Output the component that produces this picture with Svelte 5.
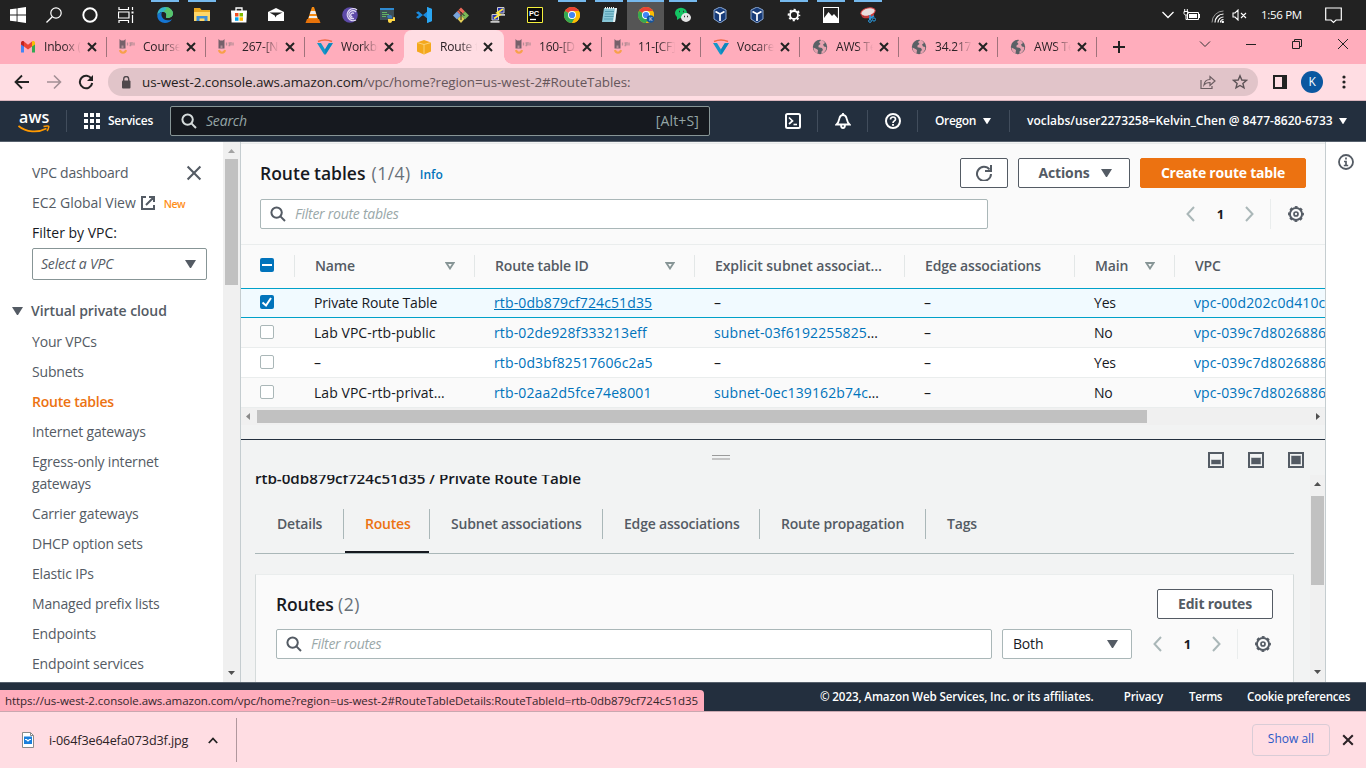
<script>
  const taskIcons = [
    { id: 'edge', open: true }, { id: 'folder', open: true }, { id: 'store' }, { id: 'mail' }, { id: 'vlc' },
    { id: 'bittorrent' }, { id: 'idle' }, { id: 'vscode' }, { id: 'git' }, { id: 'putty' }, { id: 'pycharm' },
    { id: 'chrome', open: true }, { id: 'notepad', open: true }, { id: 'chromeK', open: true, active: true },
    { id: 'wechat', open: true }, { id: 'vbox' }, { id: 'vbox' }, { id: 'gear', open: true },
    { id: 'photos', open: true }, { id: 'snip', open: true }
  ];
  const tabs = [
    { icon: 'gmail', t: 'Inbox (1' }, { icon: 'llama', t: 'Courses' }, { icon: 'llama', t: '267-[NR' },
    { icon: 'voc', t: 'Workbe' }, { icon: 'cube', t: 'Route t', active: true }, { icon: 'llama', t: '160-[DF' },
    { icon: 'llama', t: '11-[CF]' }, { icon: 'voc', t: 'Vocareu' }, { icon: 'globe', t: 'AWS Te' },
    { icon: 'globe', t: '34.217.' }, { icon: 'globe', t: 'AWS Te' }
  ];
  const sideLinks = ['Your VPCs', 'Subnets', 'Route tables', 'Internet gateways', 'Egress-only internet gateways',
    'Carrier gateways', 'DHCP option sets', 'Elastic IPs', 'Managed prefix lists', 'Endpoints', 'Endpoint services'];
  const columns = [
    { t: 'Name', sort: true }, { t: 'Route table ID', sort: true }, { t: 'Explicit subnet associat…' },
    { t: 'Edge associations' }, { t: 'Main', sort: true }, { t: 'VPC' }
  ];
  const rows = [
    { name: 'Private Route Table', id: 'rtb-0db879cf724c51d35', sub: '–', main: 'Yes', vpc: 'vpc-00d202c0d410c8', sel: true },
    { name: 'Lab VPC-rtb-public', id: 'rtb-02de928f333213eff', sub: 'subnet-03f6192255825', main: 'No', vpc: 'vpc-039c7d80268861' },
    { name: '–', id: 'rtb-0d3bf82517606c2a5', sub: '–', main: 'Yes', vpc: 'vpc-039c7d80268861' },
    { name: 'Lab VPC-rtb-privat…', id: 'rtb-02aa2d5fce74e8001', sub: 'subnet-0ec139162b74c', main: 'No', vpc: 'vpc-039c7d80268861' }
  ];
  const detailTabs = [
    { t: 'Details', w: 88 }, { t: 'Routes', w: 86 }, { t: 'Subnet associations', w: 173 },
    { t: 'Edge associations', w: 157 }, { t: 'Route propagation', w: 166 }, { t: 'Tags', w: 80 }
  ];
</script>

{#snippet search(c)}
  <svg class="i16" viewBox="0 0 16 16" fill="none" stroke={c} stroke-width="2"><circle cx="6.6" cy="6.6" r="5.2" /><path d="M10.4 10.4 15 15" /></svg>
{/snippet}
{#snippet caret(w)}
  <svg width={w} height={w * 0.8} viewBox="0 0 10 8"><path d="M0 0h10L5 8z" fill="currentColor" /></svg>
{/snippet}
{#snippet gear()}
  <svg class="i16" viewBox="0 0 16 16" fill="none" stroke="#545b64"><circle cx="8" cy="8" r="6.1" stroke-width="2" /><circle cx="8" cy="8" r="7.1" stroke-width="1.7" stroke-dasharray="2.8 2.77" stroke-dashoffset="1.4" /><circle cx="8" cy="8" r="2" stroke-width="1.7" /></svg>
{/snippet}
{#snippet pager()}
  <div class="pager">
    <svg width="9" height="16" viewBox="0 0 9 16" fill="none" stroke="#aab7b8" stroke-width="2"><path d="M8 1 1.5 8 8 15" /></svg>
    <b>1</b>
    <svg width="9" height="16" viewBox="0 0 9 16" fill="none" stroke="#aab7b8" stroke-width="2"><path d="M1 1 7.500 8 1 15" /></svg>
    <i></i>
    {@render gear()}
  </div>
{/snippet}
{#snippet cross(s, w)}
  <svg width={s} height={s} viewBox="0 0 10 10" stroke="currentColor" stroke-width={w}><path d="M1 1 9 9M9 1 1 9" /></svg>
{/snippet}
{#snippet chrome()}
  <circle cx="8" cy="8" r="8" fill="#fbbc04" />
  <path d="M8 8 1.070 4A8 8 0 0 1 14.93 4z" fill="#ea4335" />
  <path d="M1.070 4A8 8 0 0 0 8 16L11.500 10 8 8z" fill="#34a853" />
  <path d="M8 4H14.930A8 8 0 0 1 8 16L11.460 10z" fill="#fbbc04" />
  <circle cx="8" cy="8" r="4" fill="#fff" /><circle cx="8" cy="8" r="3.1" fill="#4285f4" />
{/snippet}

{#snippet taskIcon(id)}
  <svg class="i16" viewBox="0 0 16 16" fill="none">
    {#if id === 'win'}
      <path d="M0 2.300 6.600 1.400V7.500H0zM7.500 1.300 16 0V7.500H7.500zM0 8.500H6.600V14.600L0 13.700zM7.500 8.500H16V16L7.500 14.700z" fill="#fff" />
    {:else if id === 'find'}
      <circle cx="10" cy="6" r="5.200" stroke="#fff" stroke-width="1.200" /><path d="M6.300 9.700.5 15.500" stroke="#fff" stroke-width="1.300" />
    {:else if id === 'cortana'}
      <circle cx="8" cy="8" r="6.700" stroke="#fff" stroke-width="1.900" />
    {:else if id === 'view'}
      <path d="M1 0v2.500h9.500V0M1 16v-2.500h9.500V16M.5 5h10.500v6H.5zM14.500 0v3M14.500 8v8" stroke="#fff" stroke-width="1.200" /><rect x="13.500" y="4.500" width="2" height="2" fill="#fff" />
    {:else if id === 'edge'}
      <path d="M.3 9C0 3 4 0 8 0c5 0 8 3.500 8 6.500S13 11 10.500 11c-2 0-1.500-1-1.200-2C10 6 7.500 4.500 5 5 2.500 5.500.5 7 .3 9z" fill="#35b5c9" />
      <path d="M8 0c5 0 8 3.500 8 6.500S13 11 10.500 11c-2 0-1.500-1-1.200-2C10 6 8 4.500 6 4.600 8 3 11 2 8 0z" fill="#58c46a" />
      <path d="M.3 9C.5 7 2.500 5.500 5 5 3.800 7 4 13 11 13.300c2 0 3-.5 4-1C13.500 14.800 11 16 8 16 4 16 .5 13 .3 9z" fill="#1576d4" />
    {:else if id === 'folder'}
      <path d="M0 1h6l1.500 2H16v11H0z" fill="#e9a721" /><path d="M0 5h16v9H0z" fill="#ffd768" /><path d="M2.500 9h11v5h-3v-2.500h-5V14h-3z" fill="#3f8fd6" />
    {:else if id === 'store'}
      <path d="M5 4V1h6v3" stroke="#fff" stroke-width="1.300" /><path d="M0 3.500h16l-.6 12H.6z" fill="#fff" />
      <path d="M4 6h3.500v3.500H4z" fill="#f25022" /><path d="M8.500 6H12v3.500H8.500z" fill="#7fba00" /><path d="M4 10.300h3.500v3.500H4z" fill="#00a4ef" /><path d="M8.500 10.300H12v3.500H8.500z" fill="#ffb900" />
    {:else if id === 'mail'}
      <path d="M0 5 8 1l8 4v9H0z" fill="#fff" /><path d="M1.500 5.500h13L8.500 8.500l-1 2-.8-2z" fill="#222" />
    {:else if id === 'vlc'}
      <path d="M7 0h2l4 12H3z" fill="#f58a12" /><path d="M5.800 4h4.400l1 3H4.800zM4.300 9h7.400l.6 2H3.700z" fill="#eee" /><path d="M2 12h12l1.500 4H.5z" fill="#e8730a" />
    {:else if id === 'bittorrent'}
      <circle cx="8" cy="8" r="7.800" fill="#5d4aa8" /><path d="M15 3A6 6 0 1 0 14 13M14 5A4 4 0 1 0 12 11.500M12 6.500A2 2 0 1 0 10.500 10" stroke="#e3dcf5" stroke-width="1.300" />
    {:else if id === 'idle'}
      <path d="M1 1h14v12H1z" fill="#3d4f58" /><path d="M1 1h14v2H1z" fill="#2f8ad0" /><path d="M3 5.500h5M3 7.500h7M3 9.500h4" stroke="#63b463" /><path d="M8 9.500c0-2 5-2 5 0v2H9z" fill="#3e78b2" /><path d="M16 11c0-1.500-2-1.500-2 0v1H9v2c0 2.500 4 2.500 4 0h3z" fill="#ffd845" />
    {:else if id === 'vscode'}
      <path d="M11 0v4.800L2.300 11.800 0 10.300 3 8 0 5.700l2.300-1.500L11 11.200V16l5-2V2z" fill="#1a8ade" /><path d="M11 0v16l5-2V2z" fill="#2aa6f2" />
    {:else if id === 'git'}
      <path d="M8 .5 12 4.500 8 8.500 4 4.500z" fill="#e8685a" /><path d="M12 4.500 16 8.500 12 12.500 8 8.500z" fill="#7bb857" /><path d="M4 4.500 8 8.500 4 12.500 0 8.500z" fill="#7aa5dc" /><path d="M8 8.500 11.500 12 8 16 4.500 12z" fill="#e3ce57" /><path d="M5 2.500 11.500 9M8 5v8" stroke="#222" />
    {:else if id === 'putty'}
      <path d="M7.500.5h6.500v5.500H7.500zM2 7.500h6.500V13H2z" fill="#2733b5" stroke="#ccc" /><path d="M6.500 7.800h8.500M.5 14.800h9" stroke="#c9c9c9" stroke-width="1.700" /><path d="M13 2 7 6l3 1.500-6 4" stroke="#ffea3d" stroke-width="1.700" />
    {:else if id === 'pycharm'}
      <path d="M.5.5h15v15H.5z" fill="#080808" stroke="#f5f03c" /><text x="2" y="8.800" fill="#fff" font-size="7.500" font-weight="700" font-family="Liberation Sans">PC</text><path d="M3 12.500h6" stroke="#fff" stroke-width="1.300" />
    {:else if id === 'chrome'}
      {@render chrome()}
    {:else if id === 'chromeK'}
      {@render chrome()}<circle cx="12.500" cy="12" r="3.800" fill="#14569e" /><text x="11" y="14" font-size="5.500" fill="#fff" font-family="Open Sans">K</text>
    {:else if id === 'notepad'}
      <path d="M3 1h13l-2 14H1z" fill="#87c6d6" /><path d="M14 1h2l-2 14h-2z" fill="#e9f4f6" /><path d="M4 4.500h9M4 7h8.500M3.500 9.500h9M3 12h9" stroke="#559db1" /><path d="M4 1h10" stroke="#eee" stroke-dasharray="1 1" stroke-width="2" />
    {:else if id === 'wechat'}
      <ellipse cx="6" cy="6" rx="6" ry="5.200" fill="#14c463" /><path d="M2 9v4l3-2z" fill="#14c463" /><ellipse cx="11" cy="10.500" rx="5" ry="4.400" fill="#e6e6e6" /><path d="M4 4.500h1M8 4.500h1M9 9.500h1M12 9.500h1" stroke="#333" stroke-width="1.300" />
    {:else if id === 'vbox'}
      <path d="M8 0 14 3v9l-6 4-6-4V3z" fill="#173b78" stroke="#88a5cf" /><path d="M3.500 4.500 8 7l4.500-2.500M8 7v7" stroke="#fff" stroke-width="1.700" />
    {:else if id === 'gear'}
      <circle cx="8" cy="8" r="4" stroke="#fff" stroke-width="1.800" /><circle cx="8" cy="8" r="5.400" stroke="#fff" stroke-width="1.800" stroke-dasharray="2.120 2.120" stroke-dashoffset="1.060" />
    {:else if id === 'photos'}
      <path d="M.5.5h15v15H.5z" stroke="#fff" stroke-width="1.200" fill="#222" /><path d="M1 11 5.500 5 9 9l2-2 4 4.500V15H1z" fill="#fff" />
    {:else if id === 'snip'}
      <ellipse cx="8" cy="5" rx="7.300" ry="4" transform="rotate(-15 8 5)" fill="#e9dede" stroke="#d63e3e" /><path d="M1.500 8.500C4 11 9 9 14 6v2.500C9 12 4 12 2 10z" fill="#c93a3a" /><path d="M10 8v5M14 9l-5 3" stroke="#2b9be0" stroke-width="1.500" /><circle cx="14" cy="12.500" r="1.600" stroke="#2b9be0" /><circle cx="10" cy="14" r="1.400" stroke="#2b9be0" />
    {/if}
  </svg>
{/snippet}

{#snippet favicon(id)}
  <svg class="i16" viewBox="0 0 16 16" fill="none">
    {#if id === 'gmail'}
      <path d="M1 4v9.500h3V7z" fill="#4285f4" /><path d="M12 7v6.500h3V4z" fill="#34a853" /><path d="M1 4c0-2 2-2.500 3-1.500V7.500L1 5.500z" fill="#c5221f" /><path d="M4 2.500 8 5.700l4-3.200v5L8 10.500 4 7.500z" fill="#ea4335" /><path d="M12 2.500c1-1 3-.5 3 1.500v1.500l-3 2z" fill="#fbbc04" />
    {:else if id === 'llama'}
      <path d="M.5 0 2 1.500h3L6.500 0v9.500h-6z" fill="#75606a" /><path d="M2.500 6.500h2V9h-2z" fill="#b58f98" /><path d="M1 11C1.500 14.500 6.500 14.500 7 11" stroke="#f7a04a" stroke-width="2" /><path d="M8.500 3.500v3M10.500 4h1v2.500h-1M13 3v3.500M15 3.500v3" stroke="#b98e97" stroke-width="1.300" />
    {:else if id === 'voc'}
      <path d="M0 4h4l4 6.500L12 4h4L8.800 15.500H7.200z" fill="#1596c9" /><path d="M1 2.500Q8-.5 15 2.500" stroke="#f06a45" stroke-width="1.500" /><path d="M11.500 4.500 8 10.500l.5 4.500L15.500 4.500z" fill="#0d86bb" />
    {:else if id === 'cube'}
      <path d="M1 3.500 8 1l7 2.500v9L8 15.500l-7-3z" fill="#f4a81d" /><path d="M1 3.500 8 5.500l7-2M8 5.500v10" stroke="#fddb8b" stroke-width=".8" />
    {:else}
      <circle cx="8" cy="8" r="7.200" fill="#5b6166" /><path d="M9.500.8 7 3l1.500 2L6.500 6.500v1.700L10 9l1 2-1.500 1.500V15C13 13.500 14.500 11 14.200 8L12 7.500 11 5.500l2-1.500C12 2.500 11 1.500 9.500.8zM1.500 8.500 4.500 10l1.500 1-.5 3.500C3 13.500 1.500 11.500 1.500 8.500z" fill="#ffadbc" opacity=".85" />
    {/if}
  </svg>
{/snippet}

<div class="screen">
  <div class="taskbar">
    {#each ['win', 'find', 'cortana', 'view'] as id}<div class="sys">{@render taskIcon(id)}</div>{/each}
    <div class="apps">
      {#each taskIcons as a}<div class="app" class:open={a.open} class:active={a.active}>{@render taskIcon(a.id)}</div>{/each}
    </div>
    <div class="tray">
      <svg width="12" height="8" viewBox="0 0 12 8" fill="none" stroke="#fff" stroke-width="1.300"><path d="M.5 1 6 6.500 11.500 1" /></svg>
      <svg class="batt" width="17" height="12" viewBox="0 0 17 12" fill="none" stroke="#fff"><path d="M4.500 3.500h11v7h-11zM16.500 5v4M1 2.500h4v2c0 1-1 1.500-2 1.500s-2-.5-2-1.500zM1.700 0v2.500M4.300 0v2.500M3 6v4.500h1.500" /><path d="M6 5h8v4H6z" fill="#fff" stroke="none" /></svg>
      <svg class="wifi" width="13" height="13" viewBox="0 0 13 13" fill="none"><path d="M1 12.500A11.500 11.500 0 0 1 12.500 1" stroke="#999" /><path d="M4 12.500A8.500 8.500 0 0 1 12.500 4M7 12.500A5.500 5.500 0 0 1 12.500 7M9.500 12.500a3 3 0 0 1 3-3" stroke="#fff" stroke-width="1.200" /><circle cx="11.800" cy="12" r="1.200" fill="#fff" /></svg>
      <svg class="vol" width="16" height="12" viewBox="0 0 16 12" fill="none" stroke="#fff" stroke-width="1.100"><path d="M1 4v4h2l3 3V1L3 4zM9 4l5 5M14 4 9 9" /></svg>
      <span class="clock">1:56 PM</span>
      <svg class="note" width="17" height="17" viewBox="0 0 17 17" fill="none" stroke="#fff" stroke-width="1.200"><path d="M.7 1h15.600v12H11l-2.500 2.500L6 13H.7z" /></svg>
    </div>
  </div>

  <div class="tabstrip">
    {#each tabs as t, i}
      <div class="tab" class:active={t.active} class:noline={i === 3 || i === 4}>
        {@render favicon(t.icon)}<span>{t.t}</span><em>{@render cross(10, 2)}</em>
      </div>
    {/each}
    <svg class="plus" width="12" height="12" viewBox="0 0 12 12" stroke="#222" stroke-width="2"><path d="M6 0v12M0 6h12" /></svg>
    <div class="win">
      <svg width="12" height="12" viewBox="0 0 12 12" fill="none" stroke="#333"><path d="M1 3.500 6 8.500l5-5" /></svg>
      <svg width="12" height="12" viewBox="0 0 12 12" fill="none" stroke="#222"><path d="M1 6.500h10" /></svg>
      <svg width="12" height="12" viewBox="0 0 12 12" fill="none" stroke="#222"><path d="M1.500 3.500h7v7h-7zM3.500 3.500v-2h7v7h-2" /></svg>
      <svg width="12" height="12" viewBox="0 0 12 12" fill="none" stroke="#222"><path d="M1 1l10 10M11 1 1 11" /></svg>
    </div>
  </div>

  <div class="toolbar">
    <svg class="i16" viewBox="0 0 16 16" fill="none" stroke="#222" stroke-width="1.800"><path d="M15 8H2M8 1.500 1.500 8 8 14.500" /></svg>
    <svg class="i16" viewBox="0 0 16 16" fill="none" stroke="#a38f95" stroke-width="1.600"><path d="M1 8h13M8 1.500 14.500 8 8 14.500" /></svg>
    <svg class="i16" viewBox="0 0 16 16" fill="none" stroke="#222" stroke-width="2"><path d="M13.500 5A6.200 6.200 0 1 0 14.200 9" /><path d="M15 1v6H9z" fill="#222" stroke="none" /></svg>
    <div class="omni">
      <svg width="10" height="13" viewBox="0 0 10 13" fill="none"><rect x="1" y="4.500" width="8.500" height="8" rx="1" fill="#50484c" /><path d="M2.700 5V3a2.500 2.500 0 0 1 5 0v2" stroke="#50484c" stroke-width="1.400" /></svg>
      <span class="url">us-west-2.console.aws.amazon.com<u>/vpc/home?region=us-west-2#RouteTables:</u></span>
      <svg class="i16" viewBox="0 0 16 16" fill="none" stroke="#6b5d61" stroke-width="1.200"><path d="M1 6v8.500h11V12M4 11c.5-4 3-5.500 6-5.500V2.500L15 7l-5 4.500V8.500C7 8.500 5.500 9 4 11z" /></svg>
      <svg class="i16" viewBox="0 0 16 16" fill="none" stroke="#5d5357" stroke-width="1.400"><path d="m8 1.800 1.800 4.200 4.700.4-3.600 3 1.100 4.500L8 11.500l-4 2.400 1.100-4.500-3.600-3L6.200 6z" /></svg>
    </div>
    <svg class="panel" width="14" height="14" viewBox="0 0 14 14"><path d="M1 1h12v12H1z" fill="none" stroke="#222" stroke-width="2" /><path d="M9 1h4v12H9z" fill="#222" /></svg>
    <div class="avatar">K</div>
    <svg width="4" height="14" viewBox="0 0 4 14" fill="#222"><circle cx="2" cy="2" r="1.600" /><circle cx="2" cy="7" r="1.600" /><circle cx="2" cy="12" r="1.600" /></svg>
  </div>

  <div class="awsnav">
    <div class="logo"><b>aws</b>
      <svg width="32" height="9" viewBox="0 0 32 9" fill="none" stroke="#ff9900"><path d="M.5 1C8 7.500 20 8 28.500 3.500" stroke-width="1.700" /><path d="M25.500 1.500c3-.8 5.500-.8 5.300.3S30 5 29 6" stroke-width="1.500" /></svg>
    </div>
    <i class="sep"></i>
    <svg class="i16 grid9" viewBox="0 0 16 16" fill="#fff">{#each [0, 6, 12] as x}{#each [0, 6, 12] as y}<rect {x} {y} width="4" height="4" />{/each}{/each}</svg>
    <b class="svc">Services</b>
    <div class="bigsearch">{@render search('#d5dbdb')}<em>Search</em><span>[Alt+S]</span></div>
    <div class="right">
      <svg class="i16" viewBox="0 0 16 16" fill="none" stroke="#fff" stroke-width="2"><rect x="1" y="1" width="14" height="14" rx="1.500" /><path d="M4 4.500 7.500 8 4 11" stroke-width="1.700" /><path d="M8.500 11.500H12" stroke-width="1.600" /></svg>
      <i class="sep"></i>
      <svg class="i16" viewBox="0 0 16 16" fill="none" stroke="#fff" stroke-width="1.800"><path d="M1.500 11.500C4 9 4 7 4.500 5c.6-2 2-3 3.500-3s2.900 1 3.500 3c.5 2 .5 4 3 6.500zM8 2V0M6 12c0 4 4 4 4 0" /></svg>
      <i class="sep"></i>
      <svg class="i16" viewBox="0 0 16 16" fill="none" stroke="#fff" stroke-width="2"><circle cx="8" cy="8" r="7" /><path d="M5.500 6.500C5.500 3 10.500 3.500 10.500 6.200 10.500 8 8 7.700 8 10" stroke-width="1.700" /><path d="M8 11v1.700" stroke-width="1.900" /></svg>
      <i class="sep"></i>
      <b class="region">Oregon</b>{@render caret(8)}
      <i class="sep"></i>
      <b class="user">voclabs/user2273258=Kelvin_Chen @ 8477-8620-6733</b>{@render caret(8)}
    </div>
  </div>

  <div class="body">
    <aside>
      <div class="sidemain">
        <div class="ln">VPC dashboard<span class="close">{@render cross(16, 1.3)}</span></div>
        <div class="ln"><span class="ec2">EC2 Global View</span>
          <svg width="14" height="14" viewBox="0 0 14 14" fill="none" stroke="#545b64" stroke-width="2"><path d="M5 1H1v12h12V9M8 1h5v5M12.500 1.500 5 9" /></svg>
          <small>New</small>
        </div>
        <div class="ln dark">Filter by VPC:</div>
        <div class="vpcsel"><em>Select a VPC</em>{@render caret(11)}</div>
        <div class="group">{@render caret(11)}Virtual private cloud</div>
        {#each sideLinks as l}<div class="link" class:cur={l === 'Route tables'}>{l}</div>{/each}
      </div>
      <div class="vscroll"><svg width="7" height="4" viewBox="0 0 7 4"><path d="M0 4 3.500 0 7 4z" fill="#a3a3a3" /></svg><i></i><svg class="dn" width="7" height="4" viewBox="0 0 7 4"><path d="M0 0h7L3.500 4z" fill="#505050" /></svg></div>
    </aside>

    <main>
      <section class="tables">
        <div class="head">
          <div class="line1">
            <h2>Route tables <span>(1/4)</span></h2><a class="info">Info</a>
            <button class="rf"><svg class="i16" viewBox="0 0 16 16" fill="none" stroke="#545b64" stroke-width="2"><path d="M13.500 4.500A7 7 0 1 0 15 9" /><path d="M15 0v6H9" /></svg></button>
            <button class="ac">Actions {@render caret(11)}</button>
            <button class="cr">Create route table</button>
          </div>
          <div class="line2">
            <div class="field f1">{@render search('#545b64')}<em>Filter route tables</em></div>
            {@render pager()}
          </div>
        </div>
        <div class="grid">
          <div class="tr th">
            <div class="ck"><span class="box on"><svg width="14" height="14" viewBox="0 0 14 14"><path d="M2 7h10" stroke="#fff" stroke-width="2" /></svg></span></div>
            {#each columns as c}
              <div class="td"><span>{c.t}</span>{#if c.sort}<svg width="10" height="8" viewBox="0 0 10 8" fill="none" stroke="#879596" stroke-width="1.800"><path d="M1.400 1h7.200L5 6.500z" /></svg>{/if}</div>
            {/each}
          </div>
          {#each rows as r}
            <div class="tr" class:sel={r.sel}>
              <div class="ck"><span class="box" class:on={r.sel}>{#if r.sel}<svg width="14" height="14" viewBox="0 0 14 14" fill="none"><path d="M2.500 7.500 6 10.500 11 3" stroke="#fff" stroke-width="2" /></svg>{/if}</span></div>
              <div class="td name">{r.name}</div>
              <div class="td"><a class="rid">{r.id}</a></div>
              <div class="td">{#if r.sub === '–'}–{:else}<a>{r.sub}</a>…{/if}</div>
              <div class="td">–</div>
              <div class="td">{r.main}</div>
              <div class="td"><a>{r.vpc}</a></div>
            </div>
          {/each}
        </div>
        <div class="hscroll"><svg width="4" height="7" viewBox="0 0 4 7"><path d="M4 0v7L0 3.500z" fill="#8a8a8a" /></svg><i></i><svg width="4" height="7" viewBox="0 0 4 7"><path d="M0 0v7l4-3.500z" fill="#505050" /></svg></div>
      </section>

      <section class="split">
        <div class="bar">
          <span class="grip"></span>
          {#each [8.5, 6.5, 4.5] as y}
            <svg class="i16" viewBox="0 0 16 16"><path d="M1 1h14v14H1z" fill="none" stroke="#545b64" stroke-width="2" /><rect x="3" y={y - 1} width="10" height={13.5 - y} fill="#a9afb3" /><rect x="3.500" y={y - 0.5} width="9" height={12.5 - y} fill="#545b64" /></svg>
          {/each}
        </div>
        <div class="pane">
          <div class="content">
            <h3>rtb-0db879cf724c51d35 / Private Route Table</h3>
            <div class="dtabs">
              {#each detailTabs as d}
                <div class="dt" class:on={d.t === 'Routes'} style:width="{d.w}px"><span>{d.t}</span></div>
              {/each}
            </div>
            <div class="card">
              <div class="line1"><h2>Routes <span>(2)</span></h2><button class="er">Edit routes</button></div>
              <div class="line2">
                <div class="field f2">{@render search('#545b64')}<em>Filter routes</em></div>
                <div class="field both"><span>Both</span>{@render caret(11)}</div>
                {@render pager()}
              </div>
            </div>
          </div>
          <div class="vscroll2"><svg width="7" height="4" viewBox="0 0 7 4"><path d="M0 4 3.500 0 7 4z" fill="#505050" /></svg><i></i><svg class="dn" width="7" height="4" viewBox="0 0 7 4"><path d="M0 0h7L3.500 4z" fill="#505050" /></svg></div>
        </div>
      </section>
    </main>

    <div class="help">
      <svg class="i16" viewBox="0 0 16 16" fill="none" stroke="#545b64"><circle cx="8" cy="8" r="7" stroke-width="1.800" /><path d="M8 3.500v2M6 7.500h2v4M5.800 11.500h4.400" stroke-width="1.700" /></svg>
    </div>
  </div>

  <footer><span class="copy">© 2023, Amazon Web Services, Inc. or its affiliates.</span><span>Privacy</span><span class="terms">Terms</span><span class="cookie">Cookie preferences</span></footer>

  <div class="downloads">
    <svg width="12" height="16" viewBox="0 0 12 16"><path d="M.5.5h8l3 3v12H.5z" fill="#fff" stroke="#8a8a8a" /><path d="M8.500.5v3h3" fill="none" stroke="#8a8a8a" /><path d="M2 4.500h8v7.500H2z" fill="#1b7fdc" /><path d="M3 7.500h1.500L6 9l1.500-1.500H9" fill="none" stroke="#fff" stroke-width="1.200" /></svg>
    <span class="file">i-064f3e64efa073d3f.jpg</span>
    <svg width="10" height="7" viewBox="0 0 10 7" fill="none" stroke="#222" stroke-width="1.800"><path d="M.8 6 5 1.500 9.200 6" /></svg>
    <i></i>
    <div class="showall">Show all</div>
    <em>{@render cross(12, 1.7)}</em>
  </div>
  <div class="status">https://us-west-2.console.aws.amazon.com/vpc/home?region=us-west-2#RouteTableDetails:RouteTableId=rtb-0db879cf724c51d35</div>
</div>

<style>
  :global(body) { overflow: hidden; }
  * { box-sizing: border-box; }
  svg { display: block; flex: none; }
  .screen { position: relative; width: 1366px; height: 768px; display: flex; flex-direction: column; overflow: hidden; font: 14px/22px "Open Sans", "Noto Sans", sans-serif; letter-spacing: -0.18px; color: #16191f; white-space: nowrap; background: #fff; }
  .i16 { width: 16px; height: 16px; }
  b { font-weight: 600; }

  .taskbar { height: 30px; flex: none; background: #222; display: flex; }
  .sys { width: 36px; display: grid; place-items: center; }
  .apps { display: flex; margin-left: 2px; }
  .app { width: 37px; display: grid; place-items: center; position: relative; }
  .app.active { background: #555; }
  .app.open::before { content: ""; position: absolute; top: 0; left: 5px; width: 28px; height: 2px; background: #76b9ed; }
  .app.active::before { left: 0; width: 37px; }
  .tray { margin-left: auto; display: flex; align-items: center; padding-right: 24px; }
  .batt { margin-left: 9px; }
  .wifi { margin: 2px 0 0 11px; }
  .vol { margin-left: 8px; }
  .clock { color: #fff; font-size: 11.500px; letter-spacing: -0.300px; width: 45px; margin-left: 13px; }
  .note { margin-left: 19px; }

  .tabstrip { height: 34px; flex: none; background: #ffadbc; display: flex; align-items: center; padding-left: 8px; }
  .tab { width: 99px; height: 34px; display: flex; align-items: center; padding-left: 12px; position: relative; font-size: 12px; letter-spacing: -0.200px; color: #2c2226; }
  .tab span { width: 37px; margin-left: 8px; overflow: hidden; -webkit-mask-image: linear-gradient(90deg, #000 55%, transparent); mask-image: linear-gradient(90deg, #000 55%, transparent); }
  .tab em { margin-left: 6px; color: #222; }
  .tab::after { content: ""; position: absolute; right: 0; top: 7px; width: 1px; height: 20px; background: #a0727b; }
  .tab.noline::after { display: none; }
  .tab.active { background: #ffdde3; border-radius: 8px 8px 0 0; margin-right: -1px; width: 100px; }
  .tab.active::before { content: ""; position: absolute; left: -8px; right: -8px; bottom: 0; height: 8px; background: radial-gradient(circle at 0 0, transparent 7.500px, #ffdde3 8px) left / 8px 8px no-repeat, radial-gradient(circle at 100% 0, transparent 7.500px, #ffdde3 8px) right / 8px 8px no-repeat; }
  .plus { margin-left: 16px; }
  .win { margin: -6px 17px 0 auto; display: flex; gap: 34px; }

  .toolbar { height: 37px; flex: none; background: #ffdde3; border-bottom: 1px solid #d9b5bd; display: flex; align-items: center; padding-left: 14px; gap: 16px; }
  .omni { margin-left: -2px; width: 1150px; height: 28px; border-radius: 14px; background: #e1c4c9; display: flex; align-items: center; padding: 0 10px 0 13px; }
  .url { margin: 0 auto 0 11px; font-size: 13.400px; letter-spacing: -0.060px; color: #241d20; }
  .url u { text-decoration: none; color: #66565b; }
  .omni .i16 + .i16 { margin-left: 16px; }
  .panel { margin-left: -1px; }
  .avatar { width: 22px; height: 22px; margin: 0 3px 0 -2px; border-radius: 50%; background: #0b57a0; color: #fff; font-size: 12px; text-align: center; }

  .awsnav { height: 41px; flex: none; background: #232f3e; border-bottom: 1px solid #56606c; display: flex; align-items: center; padding-left: 18px; color: #fff; font-size: 12px; }
  .logo { width: 32px; height: 22px; display: flex; flex-direction: column; }
  .logo b { font: 600 16px/14px "Open Sans", sans-serif; letter-spacing: 0.100px; padding-left: 1px; }
  .logo svg { margin-top: 1px; }
  .sep { width: 1px; height: 22px; background: #414d5c; }
  .logo + .sep { margin-left: 16px; }
  .grid9 { margin: 0 8px 0 17px; }
  .svc { width: 62px; letter-spacing: -0.270px; }
  .bigsearch { width: 540px; height: 30px; border: 1px solid #879596; border-radius: 2px; background: #16191f; display: flex; align-items: center; padding: 0 10px; font-size: 14px; color: #95a5a6; }
  .bigsearch em { margin: 0 auto 0 9px; }
  .bigsearch span { letter-spacing: 0.150px; }
  .right { display: flex; align-items: center; margin-left: 75px; }
  .right > .i16 { margin-right: 16px; }
  .right > .sep { margin-right: 17px; }
  .region { width: 41px; letter-spacing: -0.350px; }
  .region + svg { margin: 0 18px 0 7px; }
  .user { width: 306px; letter-spacing: 0; }
  .user + svg { margin-left: 6px; }

  .body { height: 540px; flex: none; display: flex; background: #fff; }
  aside { width: 240px; display: flex; overflow: hidden; }
  .sidemain { width: 223px; padding-top: 16px; color: #545b64; }
  .ln { height: 30px; line-height: 30px; padding-left: 32px; display: flex; align-items: center; letter-spacing: -0.280px; }
  .ln svg { margin-left: 5px; }
  .ec2 { letter-spacing: -0.050px; }
  .ln .close svg { margin-left: 58px; }
  .ln small { color: #ff8f1a; font-size: 10.500px; font-weight: 600; margin: 2px 0 0 9px; letter-spacing: -0.450px; }
  .ln.dark { color: #16191f; letter-spacing: 0; }
  .vpcsel { margin: 0 0 0 32px; width: 175px; height: 32px; border: 1px solid #879596; border-radius: 2px; background: #fff; display: flex; align-items: center; justify-content: space-between; padding: 0 10px 0 8px; }
  .group { font-weight: 600; letter-spacing: -0.070px; display: flex; align-items: center; gap: 8px; padding-left: 12px; margin: 20px 0 9px; height: 22px; color: #545b64; }
  .link { padding-left: 32px; line-height: 22px; margin-bottom: 8px; width: 200px; white-space: normal; }
  .link.cur { color: #ec7211; font-weight: 600; letter-spacing: -0.240px; }
  .vscroll { width: 17px; background: #f0f0f0; display: flex; flex-direction: column; align-items: center; padding: 7px 1px 7px 0; }
  .vscroll i { width: 13px; height: 126px; background: #c1c1c1; margin-top: 6px; }
  .dn { margin-top: auto; }

  main { width: 1086px; border: 1px solid #c5cdd0; border-width: 0 1px; display: flex; flex-direction: column; background: #f2f3f3; overflow: hidden; }
  .tables { height: 297px; flex: none; overflow: hidden; border-top: 1px solid #e8ebeb; margin-top: 1px; }
  .head { height: 101px; background: #fafafa; border-bottom: 1px solid #eaeded; padding: 14px 19px 0; }
  .line1 { display: flex; align-items: center; height: 30px; }
  h2 { margin: -1px 0 0; font-size: 17.500px; line-height: 22px; font-weight: 600; letter-spacing: 0; word-spacing: -0.500px; }
  h2 span { font-weight: 400; color: #687078; letter-spacing: 0.500px; margin-left: 2px; }
  .card h2 { letter-spacing: -0.150px; word-spacing: -1px; }
  .card h2 span { margin-left: 1px; }
  .info { color: #0073bb; font-weight: 600; font-size: 12px; letter-spacing: 0; margin: 4px auto 0 9px; }
  button { height: 30px; border: 1px solid #545b64; border-radius: 2px; background: #fff; color: #545b64; font: 700 14px/28px "Open Sans", sans-serif; letter-spacing: -0.220px; display: flex; align-items: center; justify-content: center; padding: 0; }
  .rf { width: 48px; }
  .ac { width: 112px; margin: 0 10px; gap: 11px; padding-left: 2px; letter-spacing: -0.150px; }
  .cr { width: 166px; background: #ec7211; border-color: #ec7211; color: #fff; }
  .line2 { display: flex; align-items: center; margin-top: 11px; }
  .field { height: 30px; border: 1px solid #aab7b8; border-radius: 2px; background: #fff; display: flex; align-items: center; padding: 0 9px; }
  .field em { margin-left: 9px; color: #9aa8a9; letter-spacing: -0.250px; }
  .f1 { width: 728px; }
  .pager { margin-left: auto; display: flex; align-items: center; height: 30px; padding-right: 2px; }
  .pager b { width: 50px; text-align: center; font-size: 13px; font-weight: 700; padding-left: 1px; }
  .pager i { width: 1px; height: 30px; background: #eaeded; margin: 0 17px 0 16px; }

  .tr { display: grid; grid-template-columns: 53px 180px 220px 210px 170px 100px 152px; height: 30px; background: #fafafa; border-bottom: 1px solid #eaeded; align-items: center; }
  .tr:nth-child(4) { background: #fff; }
  .tr.th { height: 43px; border: 0; color: #545b64; font-weight: 600; }
  .tr.sel { background: #f1faff; border: 1px solid #00a1c9; margin: 0 -1px; padding-left: 1px; }
  .sel .ck { padding-left: 19px; }
  .ck { padding: 0 0 2px 19px; }
  .th .ck { padding-bottom: 3px; }
  .box { display: block; width: 14px; height: 14px; border: 1px solid #aab7b8; border-radius: 2px; background: #fff; }
  .box.on { border: 0; background: #0073bb; }
  .td { padding: 0 0 0 20px; overflow: hidden; }
  .tr.sel { padding-left: 0; }
  .tr:not(.sel) .name { letter-spacing: 0.050px; }
  .th .td { height: 22px; margin-bottom: 2px; padding: 0 19px 0 20px; display: flex; justify-content: space-between; align-items: center; border-left: 1px solid #e3e7e7; }
  .th .td:last-child { padding-right: 0; }
  .th .td:nth-child(4) { letter-spacing: -0.080px; }
  .th .td span { overflow: hidden; }
  .td a { color: #0073bb; letter-spacing: 0.120px; }
  .sel .rid { text-decoration: underline; }
  .hscroll { height: 17px; background: #f0f0f0; display: flex; align-items: center; justify-content: space-between; padding: 0 5px; }
  .hscroll i { width: 890px; height: 13px; background: #c1c1c1; margin: 0 auto 0 7px; }

  .split { height: 242px; border-top: 1px solid #232f3e; background: #f2f3f3; margin-top: -1px; }
  .bar { height: 35px; display: flex; align-items: center; gap: 24px; padding: 4px 21px 0 471px; }
  .grip { width: 18px; height: 5px; margin: -5px auto 0 0; border-top: 1px solid #9b9b9b; border-bottom: 2px solid #c4c4c4; }
  .pane { height: 207px; display: flex; overflow: hidden; }
  .content { width: 1069px; padding: 0 16px 0 14px; }
  h3 { margin: -8px 0 0; font-size: 15.200px; line-height: 22px; letter-spacing: -0.050px; font-weight: 600; }
  .dtabs { display: flex; align-items: center; border-bottom: 1px solid #aab7b8; height: 65px; padding-top: 6px; }
  .dt { height: 58px; position: relative; display: flex; align-items: center; padding-left: 22px; color: #545b64; font-weight: 600; }
  .dt span { letter-spacing: -0.200px; }
  .dt:not(:last-child)::after { content: ""; position: absolute; right: -1px; top: 14px; height: 30px; width: 1px; background: #aab7b8; }
  .dt.on { color: #ec7211; }
  .dt.on::before { content: ""; position: absolute; left: 2px; right: 0; bottom: 0; height: 2px; background: #16191f; }
  .card { margin-top: 20px; height: 140px; border: 1px solid #d5dbdb; border-top-color: #eaeded; background: #fafafa; padding: 14px 20px 0; }
  .er { width: 116px; margin-left: auto; }
  .card .line2 { margin-top: 10px; }
  .card .pager i { margin: 0 17px 0 16px; }
  .f2 { width: 716px; }
  .both { width: 130px; margin-left: 10px; justify-content: space-between; padding: 0 13px 0 10px; }
  .both :global(svg) { color: #545b64; }
  .vscroll2 { width: 15px; background: #f0f0f0; display: flex; flex-direction: column; align-items: center; padding: 7px 0 8px; }
  .vscroll2 i { width: 13px; height: 89px; background: #c1c1c1; margin-top: 10px; }
  .help { width: 40px; padding: 12px 0 0 12px; }

  footer { height: 30px; flex: none; background: #232f3e; border-top: 1px solid #56606c; border-bottom: 1px solid #c9a7b0; color: #fff; font-weight: 600; font-size: 11.600px; letter-spacing: -0.110px; display: flex; align-items: center; justify-content: flex-end; gap: 26px; padding-right: 16px; }
  .copy { margin-right: 4px; }
  .terms { letter-spacing: -0.400px; }
  .cookie { letter-spacing: -0.280px; margin-left: -1px; }
  .downloads { height: 56px; flex: none; background: #ffdde3; display: flex; align-items: center; padding-left: 22px; color: #2c2226; }
  .file { font-size: 12.600px; letter-spacing: -0.110px; width: 144px; margin-left: 15px; padding-top: 1px; }
  .downloads > svg + span + svg { margin-left: 15px; }
  .downloads i { width: 1px; height: 44px; background: #b0979d; margin-left: 18px; }
  .showall { margin-left: auto; width: 78px; height: 32px; border: 1px solid #d9ccd6; border-radius: 4px; text-align: center; line-height: 28px; font-size: 12px; letter-spacing: 0; color: #2b58c6; }
  .downloads em { margin: 0 12px; }
  .status { position: absolute; left: 0; top: 690px; width: 704px; height: 21px; border-radius: 0 4px 0 0; background: #ffadbc; padding-left: 5px; font-size: 11.500px; line-height: 22px; letter-spacing: -0.050px; color: #33262b; }
</style>
